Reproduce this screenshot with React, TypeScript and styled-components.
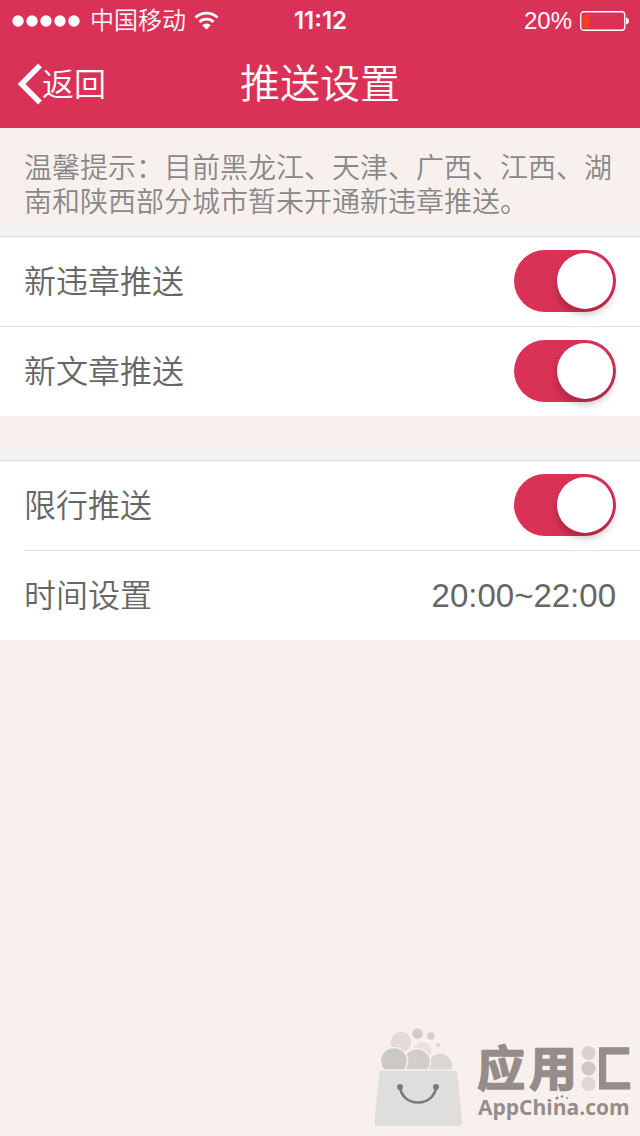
import React, { useId, useState } from "react";
import styled, { createGlobalStyle } from "styled-components";

const accent = "#da3257";
const sans = `"Liberation Sans", "Noto Sans CJK SC", sans-serif`;

const GlobalStyle = createGlobalStyle`
  *, *::before, *::after { box-sizing: border-box; }
  body {
    margin: 0;
    background: #f8f0ed;
    color: #666;
    font-family: ${sans};
    font-weight: 350;
  }
`;

const Screen = styled.div`
  position: relative;
  min-height: 100vh;
  display: flex;
  flex-direction: column;
`;

const Header = styled.header`
  background: ${accent};
  color: #fff;
`;

const StatusBar = styled.div`
  display: grid;
  grid-template-columns: 1fr auto 1fr;
  align-items: center;
  height: 42px;
  padding: 0 11px 0 12px;
  font-size: 24px;
  line-height: 40px;
`;

const StatusGroup = styled.div<{ $end?: boolean }>`
  display: flex;
  align-items: center;
  justify-content: ${(p) => (p.$end ? "flex-end" : "flex-start")};
  gap: 8px;
`;

const Clock = styled.time`
  font-family: Inter, sans-serif;
  font-weight: 600;
`;

const NavBar = styled.nav`
  display: grid;
  grid-template-columns: 1fr auto 1fr;
  align-items: center;
  height: 86px;
  padding: 0 16px 2px;
`;

const BackButton = styled.button`
  display: flex;
  align-items: center;
  justify-self: start;
  padding: 0;
  border: 0;
  background: none;
  color: inherit;
  font: inherit;
  font-size: 32px;
  line-height: 40px;
  cursor: pointer;
`;

const BackLabel = styled.span`
  padding-top: 2px;
`;

const Title = styled.h1`
  margin: 0;
  font-size: 40px;
  font-weight: inherit;
  line-height: 48px;
`;

const Notice = styled.p`
  margin: 0;
  padding: 24px 24px 4px;
  color: #888;
  font-size: 28px;
  line-height: 34px;
`;

const Group = styled.section`
  border-top: 12px solid #f2f2f2;
  margin-bottom: 32px;
`;

const Rows = styled.div<{ $inset?: boolean }>`
  background: #fff;

  > *::before {
    content: "";
    position: absolute;
    top: 0;
    right: 0;
    left: 0;
    border-top: 1px solid #e0e0e0;
  }

  > * + *::before {
    left: ${(p) => (p.$inset ? "24px" : "0")};
  }
`;

const Row = styled.div`
  position: relative;
  display: flex;
  align-items: center;
  justify-content: space-between;
  height: 90px;
  padding: 0 24px;
  font-size: 32px;
  line-height: 40px;
`;

const RowButton = styled(Row).attrs({ as: "button" })`
  width: 100%;
  border: 0;
  background: none;
  color: inherit;
  font-family: inherit;
  font-weight: inherit;
  text-align: left;
  cursor: pointer;
`;

const RowLabel = styled.label`
  padding-top: 2px;
`;

const RowValue = styled.span`
  padding-top: 2px;
  font-size: 33px;
`;

const Switch = styled.input.attrs({ type: "checkbox", role: "switch" })`
  appearance: none;
  flex: none;
  display: flex;
  align-items: center;
  width: 102px;
  height: 62px;
  margin: 0;
  padding: 3px;
  border-radius: 31px;
  background: #ddd;
  cursor: pointer;

  &::before {
    content: "";
    width: 56px;
    height: 56px;
    border-radius: 50%;
    background: #fff;
    box-shadow: 0 5px 8px rgba(0, 0, 0, 0.25);
  }

  &:checked {
    justify-content: flex-end;
    background: ${accent};
  }
`;

const Watermark = styled.svg`
  position: absolute;
  right: 0;
  bottom: 0;
`;

function SignalDots() {
  return (
    <svg width="70" height="12" viewBox="0 0 70 12" fill="#fff" aria-hidden="true">
      {[6, 20, 34, 48, 62].map((x) => (
        <circle key={x} cx={x} cy="6" r="5.7" />
      ))}
    </svg>
  );
}

function WifiIcon() {
  return (
    <svg width="26" height="20" viewBox="0 0 26 20" fill="none" stroke="#fff" strokeWidth="2.8" aria-hidden="true">
      <path d="M1.500 6.600a16 16 0 0 1 22 0" />
      <path d="M5.500 10.900a10 10 0 0 1 14 0" />
      <path d="M12.500 18.600l-4.300-4.400a6.200 6.200 0 0 1 8.600 0z" fill="#fff" stroke="none" />
    </svg>
  );
}

function BatteryIcon() {
  return (
    <svg width="49" height="20" viewBox="0 0 49 20" aria-hidden="true">
      <rect x="0.75" y="0.75" width="44" height="18.5" rx="3" fill="none" stroke="#fff" strokeWidth="1.3" />
      <rect x="3" y="3" width="7" height="14" rx="1" fill="#ff3b1f" />
      <path d="M46 6.500q3 .8 3 3.500t-3 3.500z" fill="#fff" />
    </svg>
  );
}

function BackIcon() {
  return (
    <svg width="26" height="42" viewBox="0 0 26 42" fill="none" stroke="#fff" strokeWidth="5.4" aria-hidden="true">
      <path d="M24 2.500L5.500 21 24 39.500" />
    </svg>
  );
}

function AppChinaMark() {
  return (
    <Watermark width="280" height="120" viewBox="0 0 280 120" role="img" aria-label="应用汇 AppChina.com">
      <defs>
        <clipPath id="boxPart">
          <rect x="239" y="20" width="41" height="62" />
        </clipPath>
      </defs>
      <g stroke="#f8f0ed" strokeWidth="1.5">
        <circle cx="41" cy="26" r="11" fill="#e3dad9" />
        <circle cx="57.5" cy="17.5" r="6" fill="#d3cbca" />
        <circle cx="71" cy="20" r="4.6" fill="#d7cfce" />
        <circle cx="78" cy="29" r="2.7" fill="#d9d1d0" />
        <circle cx="62" cy="35" r="10" fill="#eae2e0" />
        <circle cx="80" cy="50" r="13" fill="#dad7d7" />
        <circle cx="57" cy="46" r="13.5" fill="#d2cecd" />
        <circle cx="34" cy="45" r="13.5" fill="#cbc8c8" />
      </g>
      <path d="M22 54h73q2 0 2.200 2l5 50q.3 4-4 4H18q-4 0-3.800-4l5.500-50q.3-2 2.300-2z" fill="#e0dedd" />
      <path d="M18 54h80" stroke="#f8f0ed" strokeWidth="1.5" />
      <path d="M40 71c1 9 8 15.500 18 15.500S75 80 76 71" fill="none" stroke="#7e7979" strokeWidth="2.6" />
      <circle cx="40" cy="71" r="3" fill="#7e7979" />
      <circle cx="76" cy="71" r="3" fill="#7e7979" />
      <g
        fill="#968c8a"
        stroke="#968c8a"
        strokeWidth="1.6"
        strokeLinejoin="round"
        fontFamily='"Noto Sans CJK SC", sans-serif'
        fontWeight="700"
        fontSize="48"
      >
        <text x="117" y="70">应</text>
        <text x="169" y="70">用</text>
        <text x="223" y="70" clipPath="url(#boxPart)">汇</text>
      </g>
      <circle cx="228.5" cy="37" r="7" fill="#dbd2d0" />
      <circle cx="228.5" cy="52.5" r="7" fill="#d0c7c5" />
      <circle cx="228.5" cy="68" r="7" fill="#e0d7d5" />
      <g fill="#968c8a">
        <circle cx="197" cy="82" r="1.6" />
        <circle cx="202" cy="80.5" r="1.3" />
        <circle cx="207" cy="82" r="1" />
      </g>
      <text x="118" y="99" fill="#968c8a" fontFamily='"Open Sans", sans-serif' fontWeight="700" fontSize="21">
        AppChina.com
      </text>
    </Watermark>
  );
}

function SwitchRow({ label }: { label: string }) {
  const id = useId();
  const [on, setOn] = useState(true);
  return (
    <Row>
      <RowLabel htmlFor={id}>{label}</RowLabel>
      <Switch id={id} checked={on} onChange={(e) => setOn(e.target.checked)} />
    </Row>
  );
}

export default function App() {
  return (
    <Screen>
      <GlobalStyle />
      <Header>
        <StatusBar>
          <StatusGroup>
            <SignalDots />
            <span>中国移动</span>
            <WifiIcon />
          </StatusGroup>
          <Clock>11:12</Clock>
          <StatusGroup $end>
            <span>20%</span>
            <BatteryIcon />
          </StatusGroup>
        </StatusBar>
        <NavBar>
          <BackButton type="button">
            <BackIcon />
            <BackLabel>返回</BackLabel>
          </BackButton>
          <Title>推送设置</Title>
        </NavBar>
      </Header>
      <main>
        <Notice>温馨提示：目前黑龙江、天津、广西、江西、湖南和陕西部分城市暂未开通新违章推送。</Notice>
        <Group>
          <Rows>
            <SwitchRow label="新违章推送" />
            <SwitchRow label="新文章推送" />
          </Rows>
        </Group>
        <Group>
          <Rows $inset>
            <SwitchRow label="限行推送" />
            <RowButton type="button">
              <RowLabel as="span">时间设置</RowLabel>
              <RowValue>20:00~22:00</RowValue>
            </RowButton>
          </Rows>
        </Group>
      </main>
      <AppChinaMark />
    </Screen>
  );
}
